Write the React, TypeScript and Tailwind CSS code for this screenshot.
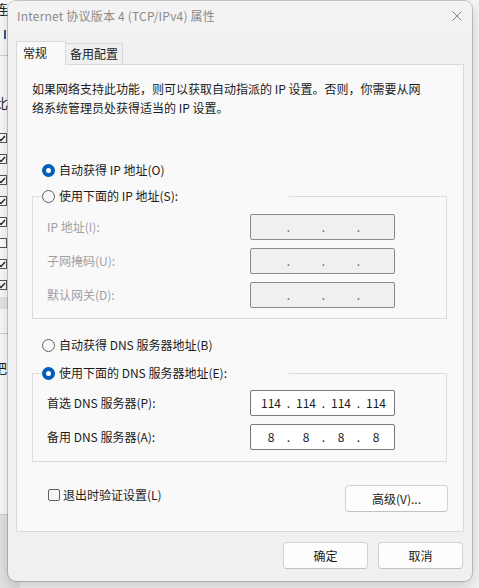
import React, { Fragment } from "react";

const Radio = ({ checked }: { checked: boolean }) =>
  checked ? (
    <span className="flex h-[13px] w-[13px] shrink-0 items-center justify-center rounded-full bg-[#005fb8]">
      <span className="h-[5px] w-[5px] rounded-full bg-white" />
    </span>
  ) : (
    <span className="h-[13px] w-[13px] shrink-0 rounded-full border border-[#5f5f5f] bg-[#f7f7f7]" />
  );

function IpBox({ values, disabled }: { values?: string[]; disabled?: boolean }) {
  const v = values ?? ["", "", "", ""];
  return (
    <div
      className={
        disabled
          ? "flex h-[26px] w-[145px] items-center rounded-[2px] border border-[#8a8a8a] bg-[#f0f0f0] pl-[6px]"
          : "flex h-[26px] w-[145px] items-center rounded-[2px] border border-[#7a7a7a] bg-white pl-[6px]"
      }
    >
      {v.map((x, i) => (
        <Fragment key={i}>
          <span className="w-[28px] text-center text-[#1a1a1a]">{x}</span>
          {i < 3 && (
            <span className={disabled ? "w-[7px] text-center text-[#6a6a6a]" : "w-[7px] text-center text-[#1a1a1a]"}>.</span>
          )}
        </Fragment>
      ))}
    </div>
  );
}

function Row({ label, disabled, values }: { label: string; disabled?: boolean; values?: string[] }) {
  return (
    <div className="flex h-[26px] items-center">
      <span className={disabled ? "w-[203px] text-[#a0a0a0]" : "w-[203px] text-[#1b1b1b]"}>{label}</span>
      <IpBox disabled={disabled} values={values} />
    </div>
  );
}

function BgCheck({ checked }: { checked: boolean }) {
  return (
    <div className="flex h-[21px] items-center">
      <div className="relative ml-[-4px] h-[10px] w-[11px] border border-[#555] bg-white">
        {checked && (
          <svg className="absolute left-[1px] top-[1px]" width="8" height="7" viewBox="0 0 8 7">
            <path d="M1 3.5 L3 5.5 L7 1" stroke="#222" strokeWidth="1.3" fill="none" />
          </svg>
        )}
      </div>
    </div>
  );
}

export default function App() {
  return (
    <div className="relative h-[588px] w-[479px] overflow-hidden bg-[#f4f4f4] font-[Noto_Sans_CJK_SC,sans-serif] text-[12px] leading-[20px] text-[#1b1b1b]">
      {/* background window strip */}
      <div className="absolute left-0 top-0 flex h-[515px] w-[20px] flex-col border-b border-[#cfcfcf] bg-[#fbfbfb]">
        <span className="ml-[-5px] mt-[0px] text-[13px] leading-[18px] text-[#222]">连</span>
        <div className="ml-[4px] mt-[12px] h-[9px] w-[2px] bg-[#3b5b8a]" />
        <div className="mt-[16px] h-px w-full bg-[#d0d0d0]" />
        <span className="ml-[-5px] mt-[38px] text-[13px] leading-[18px] text-[#222]">比</span>
        <div className="mt-[15px] flex flex-col">
          <BgCheck checked />
          <BgCheck checked />
          <BgCheck checked />
          <BgCheck checked />
          <BgCheck checked />
          <BgCheck checked={false} />
          <BgCheck checked />
          <BgCheck checked />
        </div>
        <div className="mt-[2px] h-[12px] w-full bg-[#e6e6e6]" />
        <div className="mt-[24px] h-px w-full bg-[#d0d0d0]" />
        <span className="ml-[-6px] mt-[25px] text-[13px] leading-[18px] text-[#222]">把</span>
      </div>
      <div className="absolute bottom-0 left-0 h-[73px] w-[20px] bg-[#e3e3e3]" />

      {/* dialog */}
      <div className="absolute left-[8px] top-[1px] flex w-[464px] flex-col overflow-hidden rounded-[8px] bg-[#f0f0f0] shadow-[0_0_0_1px_rgba(0,0,0,0.18),0_6px_16px_rgba(0,0,0,0.18)]">
        <div className="flex h-[30px] items-center justify-between bg-[#f3f3f3] pl-[9px] pr-[10px]">
          <span className="tracking-[0.2px] text-[#8a8a8a]">Internet 协议版本 4 (TCP/IPv4) 属性</span>
          <svg width="10" height="10" viewBox="0 0 10 10">
            <path d="M0.5 0.5 L9.5 9.5 M9.5 0.5 L0.5 9.5" stroke="#8a8a8a" strokeWidth="1" />
          </svg>
        </div>

        {/* tabs */}
        <div className="ml-[8px] mt-[10px] flex h-[23px] items-end">
          <div className="relative z-10 mb-[-1px] flex h-[24px] w-[50px] items-start border border-b-0 border-[#d9d9d9] bg-[#f9f9f9] pl-[6px] pt-[1px]">
            常规
          </div>
          <div className="flex h-[21px] w-[57px] items-center justify-center border border-b-0 border-l-0 border-[#d9d9d9] bg-[#f0f0f0]">
            备用配置
          </div>
        </div>

        {/* panel */}
        <div className="mx-[8px] flex h-[468px] flex-col border border-[#d9d9d9] bg-[#f9f9f9]">
          <p className="pl-[15px] pt-[14px] leading-[19px]">
            如果网络支持此功能，则可以获取自动指派的 IP 设置。否则，你需要从网
            <br />
            络系统管理员处获得适当的 IP 设置。
          </p>

          <div className="ml-[25px] mt-[43px] flex h-[20px] items-center gap-[4px]">
            <Radio checked />
            <span>自动获得 IP 地址(O)</span>
          </div>

          <fieldset className="ml-[15px] mt-[6px] w-[415px] border border-[#dcdcdc] pb-[10px]">
            <legend className="ml-[9px] flex h-[20px] w-[247px] items-center gap-[4px]">
              <Radio checked={false} />
              <span>使用下面的 IP 地址(S):</span>
            </legend>
            <div className="mt-[8px] flex flex-col gap-[8px] pl-[14px]">
              <Row label="IP 地址(I):" disabled />
              <Row label="子网掩码(U):" disabled />
              <Row label="默认网关(D):" disabled />
            </div>
          </fieldset>

          <div className="ml-[25px] mt-[16px] flex h-[20px] items-center gap-[4px]">
            <Radio checked={false} />
            <span>自动获得 DNS 服务器地址(B)</span>
          </div>

          <fieldset className="ml-[15px] mt-[8px] w-[415px] border border-[#dcdcdc] pb-[11px]">
            <legend className="ml-[9px] flex h-[20px] w-[247px] items-center gap-[4px]">
              <Radio checked />
              <span>使用下面的 DNS 服务器地址(E):</span>
            </legend>
            <div className="mt-[7px] flex flex-col gap-[8px] pl-[14px]">
              <Row label="首选 DNS 服务器(P):" values={["114", "114", "114", "114"]} />
              <Row label="备用 DNS 服务器(A):" values={["8", "8", "8", "8"]} />
            </div>
          </fieldset>

          <div className="ml-[31px] mr-[15px] mt-[23px] flex items-start justify-between">
            <div className="flex h-[20px] items-center gap-[3px]">
              <span className="h-[12px] w-[12px] rounded-[2px] border border-[#5f5f5f] bg-[#f7f7f7]" />
              <span>退出时验证设置(L)</span>
            </div>
            <button className="flex h-[27px] w-[103px] items-center justify-center rounded-[4px] border border-[#d3d3d3] border-b-[#c2c2c2] bg-[#fdfdfd]">
              高级(V)...
            </button>
          </div>
        </div>

        {/* bottom buttons */}
        <div className="mb-[12px] mr-[9px] mt-[10px] flex justify-end gap-[10px]">
          <button className="flex h-[27px] w-[85px] items-center justify-center rounded-[4px] border border-[#d3d3d3] border-b-[#c2c2c2] bg-[#fdfdfd]">
            确定
          </button>
          <button className="flex h-[27px] w-[85px] items-center justify-center rounded-[4px] border border-[#d3d3d3] border-b-[#c2c2c2] bg-[#fdfdfd]">
            取消
          </button>
        </div>
      </div>
    </div>
  );
}
